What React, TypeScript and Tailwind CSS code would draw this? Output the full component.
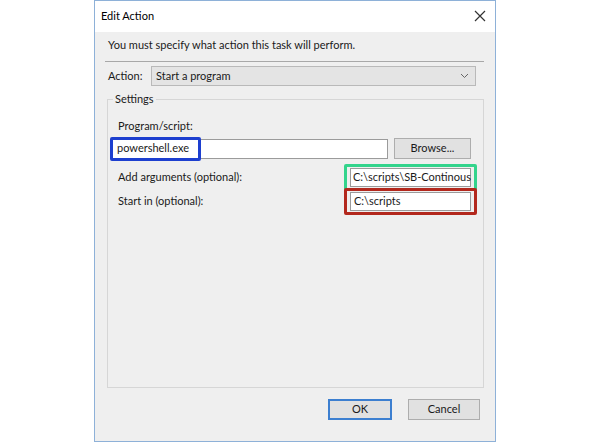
import React from "react";

const font = { fontFamily: 'Lato, "Noto Sans", sans-serif' };

export default function App() {
  return (
    <div className="w-[592px] h-[444px] bg-white pl-[94px] pt-0 text-[11px] text-[#1a1a1a]" style={font}>
      <div className="w-[402px] h-[442px] border border-[#8eb1d8] bg-[#efefef] flex flex-col">
        {/* title bar */}
        <div className="h-[31px] bg-white flex items-center justify-between pl-[6px] pr-[8px] pb-[2px] shrink-0">
          <span className="text-[11px] text-black leading-none">Edit Action</span>
          <svg width="12" height="12" viewBox="0 0 12 12" className="mr-[1px]">
            <path d="M1 1 L11 11 M11 1 L1 11" stroke="#333" strokeWidth="1.2" fill="none" />
          </svg>
        </div>
        {/* body */}
        <div className="flex flex-col pl-[10px] pr-[10px] flex-1">
          <div className="pt-[5px] pl-[3px] leading-[16px] h-[21px]">You must specify what action this task will perform.</div>
          <div className="h-px bg-[#a8a8a8] mt-[8px] mr-[1px]"></div>
          <div className="flex items-center mt-[4px] h-[20px]">
            <span className="pl-[3px] w-[46px]">Action:</span>
            <div className="flex-1 h-[20px] mr-[9px] border border-[#b9b9b9] bg-[#e4e4e4] flex items-center justify-between pl-[4px] pr-[6px]">
              <span>Start a program</span>
              <svg width="9" height="6" viewBox="0 0 9 6">
                <path d="M1 1 L4.5 4.5 L8 1" stroke="#666" strokeWidth="1" fill="none" />
              </svg>
            </div>
          </div>
          <fieldset className="mt-[6px] border border-[#d6d6d6] ml-[2px] mr-[1px] h-[296px] relative">
            <legend className="ml-[5px] px-[2px] leading-[14px]">Settings</legend>
            <div className="pl-[10px] pt-[12px] leading-[16px]">Program/script:</div>
            <div className="flex items-center mt-[4px] pl-[4px]">
              <div className="relative w-[276px] h-[20px] border border-[#9b9b9b] bg-white flex items-center pl-[4px]">
                <span>powershell.exe</span>
                <div className="absolute left-[-3px] top-[-3px] w-[91px] h-[24px] border-[3px] border-[#1d3fcf] rounded-[2px]"></div>
              </div>
              <div className="ml-[6px] w-[77px] h-[21px] border border-[#adadad] bg-[#e1e1e1] flex items-center justify-center">
                Browse...
              </div>
            </div>
            <div className="flex items-center mt-[8px] h-[20px]">
              <span className="pl-[10px] w-[242px]">Add arguments (optional):</span>
              <div className="relative w-[121px] h-[19px] border border-[#9b9b9b] bg-white flex items-center pl-[2px]">
                <span className="whitespace-nowrap">C:\scripts\SB-Continous</span>
                <div className="absolute left-[-7px] top-[-5px] w-[133px] h-[27px] border-[3px] border-[#33d48c] rounded-[2px]"></div>
              </div>
            </div>
            <div className="flex items-center mt-[4px] h-[20px]">
              <span className="pl-[10px] w-[242px]">Start in (optional):</span>
              <div className="relative w-[121px] h-[19px] border border-[#9b9b9b] bg-white flex items-center pl-[3px]">
                <span>C:\scripts</span>
                <div className="absolute left-[-7px] top-[-5px] w-[133px] h-[27px] border-[3px] border-[#b3281d] rounded-[2px]"></div>
              </div>
            </div>
          </fieldset>
          <div className="flex justify-end mt-[11px] pr-[5px] gap-[16px]">
            <div className="w-[64px] h-[21px] border-2 border-[#3c7fd0] bg-[#e1e1e1] flex items-center justify-center">OK</div>
            <div className="w-[72px] h-[21px] border border-[#adadad] bg-[#e1e1e1] flex items-center justify-center">Cancel</div>
          </div>
        </div>
      </div>
    </div>
  );
}
